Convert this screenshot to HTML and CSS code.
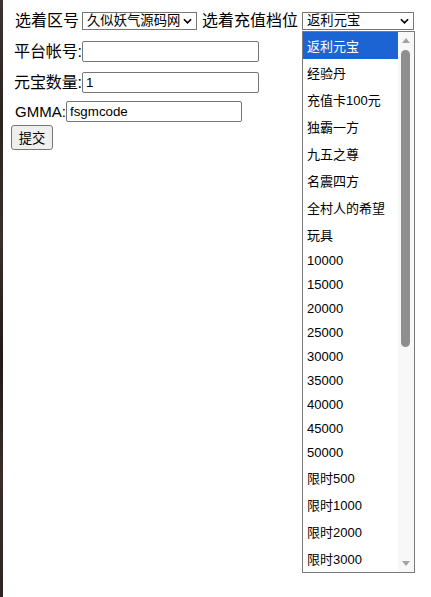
FILE: index.html
```html
<!DOCTYPE html>
<html lang="zh">
<head>
<meta charset="utf-8">
<title>充值</title>
<link rel="stylesheet" href="styles.css">
</head>
<body>
<div class="page">
  <form class="form">
    <div class="row row-first">
      <span class="label label-area">选着区号</span>
      <span class="select select-area">
        <span class="select-text">久似妖气源码网</span>
        <svg class="chev" viewBox="0 0 10 6" width="9" height="6"><path d="M1 1 L5 5 L9 1" fill="none" stroke="#000" stroke-width="1.8"/></svg>
      </span>
      <span class="label label-tier">选着充值档位</span>
      <span class="select-wrap">
        <span class="select select-tier">
          <span class="select-text">返利元宝</span>
          <svg class="chev" viewBox="0 0 10 6" width="9" height="6"><path d="M1 1 L5 5 L9 1" fill="none" stroke="#000" stroke-width="1.8"/></svg>
        </span>
        <div class="listbox">
          <ul class="options">
            <li class="opt cjk selected">返利元宝</li>
            <li class="opt cjk">经验丹</li>
            <li class="opt cjk">充值卡100元</li>
            <li class="opt cjk">独霸一方</li>
            <li class="opt cjk">九五之尊</li>
            <li class="opt cjk">名震四方</li>
            <li class="opt cjk">全村人的希望</li>
            <li class="opt cjk">玩具</li>
            <li class="opt num">10000</li>
            <li class="opt num">15000</li>
            <li class="opt num">20000</li>
            <li class="opt num">25000</li>
            <li class="opt num">30000</li>
            <li class="opt num">35000</li>
            <li class="opt num">40000</li>
            <li class="opt num">45000</li>
            <li class="opt num">50000</li>
            <li class="opt cjk">限时500</li>
            <li class="opt cjk">限时1000</li>
            <li class="opt cjk">限时2000</li>
            <li class="opt cjk">限时3000</li>
          </ul>
          <div class="scrollbar">
            <svg class="sb-arrow sb-up" viewBox="0 0 8 5" width="8" height="5"><path d="M0 5 L4 0 L8 5 Z" fill="#a3a3a3"/></svg>
            <div class="sb-thumb"></div>
            <svg class="sb-arrow sb-down" viewBox="0 0 8 5" width="8" height="5"><path d="M0 0 L4 5 L8 0 Z" fill="#a3a3a3"/></svg>
          </div>
        </div>
      </span>
    </div>
    <div class="row row-account">
      <span class="label label-account">平台帐号:</span>
      <input class="field" type="text" value="">
    </div>
    <div class="row row-amount">
      <span class="label label-account">元宝数量:</span>
      <input class="field" type="text" value="1">
    </div>
    <div class="row row-gm">
      <span class="label label-gm">GMMA:</span>
      <input class="field" type="text" value="fsgmcode">
    </div>
    <div class="row row-submit">
      <button class="btn" type="button">提交</button>
    </div>
  </form>
</div>
</body>
</html>
```

FILE: styles.css
```css
html, body {
  margin: 0;
  padding: 0;
}

body {
  width: 431px;
  height: 597px;
  overflow: hidden;
  background:
    linear-gradient(to bottom, #3a3532 0%, #2a2420 20%, #3b302b 40%, #1f1a18 60%, #3a2e29 80%, #2b2623 100%) left top / 3px 100% no-repeat,
    #ffffff;
  font-family: "Liberation Sans", "Noto Sans CJK SC", sans-serif;
  color: #000;
}

.page {
  padding: 12px 0 0 11px;
}

.form {
  display: flex;
  flex-direction: column;
  margin: 0;
}

.row {
  display: flex;
  align-items: center;
}

.row-first {
  height: 18px;
}

.row-account {
  margin-top: 11px;
  height: 21px;
}

.row-amount {
  margin-top: 10px;
  height: 21px;
}

.row-gm {
  margin-top: 8px;
  height: 21px;
}

.row-submit {
  margin-top: 3px;
}

.label {
  font-size: 16px;
  white-space: nowrap;
  line-height: 18px;
}

.label-area {
  margin-left: 4px;
  width: 67px;
}

.label-tier {
  margin-left: 5px;
  width: 100px;
}

.label-account {
  margin-left: 3px;
  letter-spacing: -0.1px;
}

.label-gm {
  margin-left: 4px;
  width: 51px;
  font-size: 15px;
}

.select {
  box-sizing: border-box;
  display: flex;
  align-items: center;
  justify-content: space-between;
  height: 18px;
  border: 1px solid #767676;
  background: #fff;
  padding: 0 4px 0 4px;
  font-size: 13.33px;
  line-height: 16px;
}

.select-area {
  width: 115px;
}

.select-tier {
  width: 112px;
}

.select-text {
  white-space: nowrap;
}

.chev {
  display: block;
  flex: none;
}

.select-wrap {
  position: relative;
  display: block;
}

.listbox {
  position: absolute;
  top: 19px;
  left: 0;
  box-sizing: border-box;
  width: 113px;
  height: 542px;
  border: 1px solid #7a7a7a;
  background: #fff;
  display: flex;
  overflow: hidden;
  z-index: 2;
}

.options {
  list-style: none;
  margin: 0;
  padding: 0;
  width: 95px;
  flex: none;
}

.opt {
  box-sizing: border-box;
  padding-left: 4px;
  font-size: 13px;
  white-space: nowrap;
  display: flex;
  align-items: center;
  color: #000;
}

.opt.cjk {
  height: 27px;
}

.opt.num {
  height: 24px;
}

.opt.selected {
  background: #1c64d3;
  color: #fff;
}

.scrollbar {
  position: relative;
  width: 16px;
  flex: none;
  background: #f8f8f8;
}

.sb-arrow {
  position: absolute;
  left: 4px;
  display: block;
}

.sb-up {
  top: 6px;
}

.sb-down {
  bottom: 6px;
}

.sb-thumb {
  position: absolute;
  top: 18px;
  left: 3px;
  width: 9px;
  height: 297px;
  border-radius: 5px;
  background: #8f8f8f;
}

.field {
  box-sizing: border-box;
  width: 177px;
  height: 21px;
  margin: 0;
  border: 1px solid #767676;
  border-radius: 2px;
  padding: 1px 3px;
  font-family: "Liberation Sans", "Noto Sans CJK SC", sans-serif;
  font-size: 13.33px;
  color: #000;
  background: #fff;
  outline: none;
}

.row-gm .field {
  width: 176px;
}

.btn {
  box-sizing: border-box;
  width: 42px;
  height: 25px;
  margin: 0;
  padding: 0;
  border: 1px solid #767676;
  border-radius: 3px;
  background: #efefef;
  font-family: "Liberation Sans", "Noto Sans CJK SC", sans-serif;
  font-size: 13.33px;
  color: #000;
}
```
